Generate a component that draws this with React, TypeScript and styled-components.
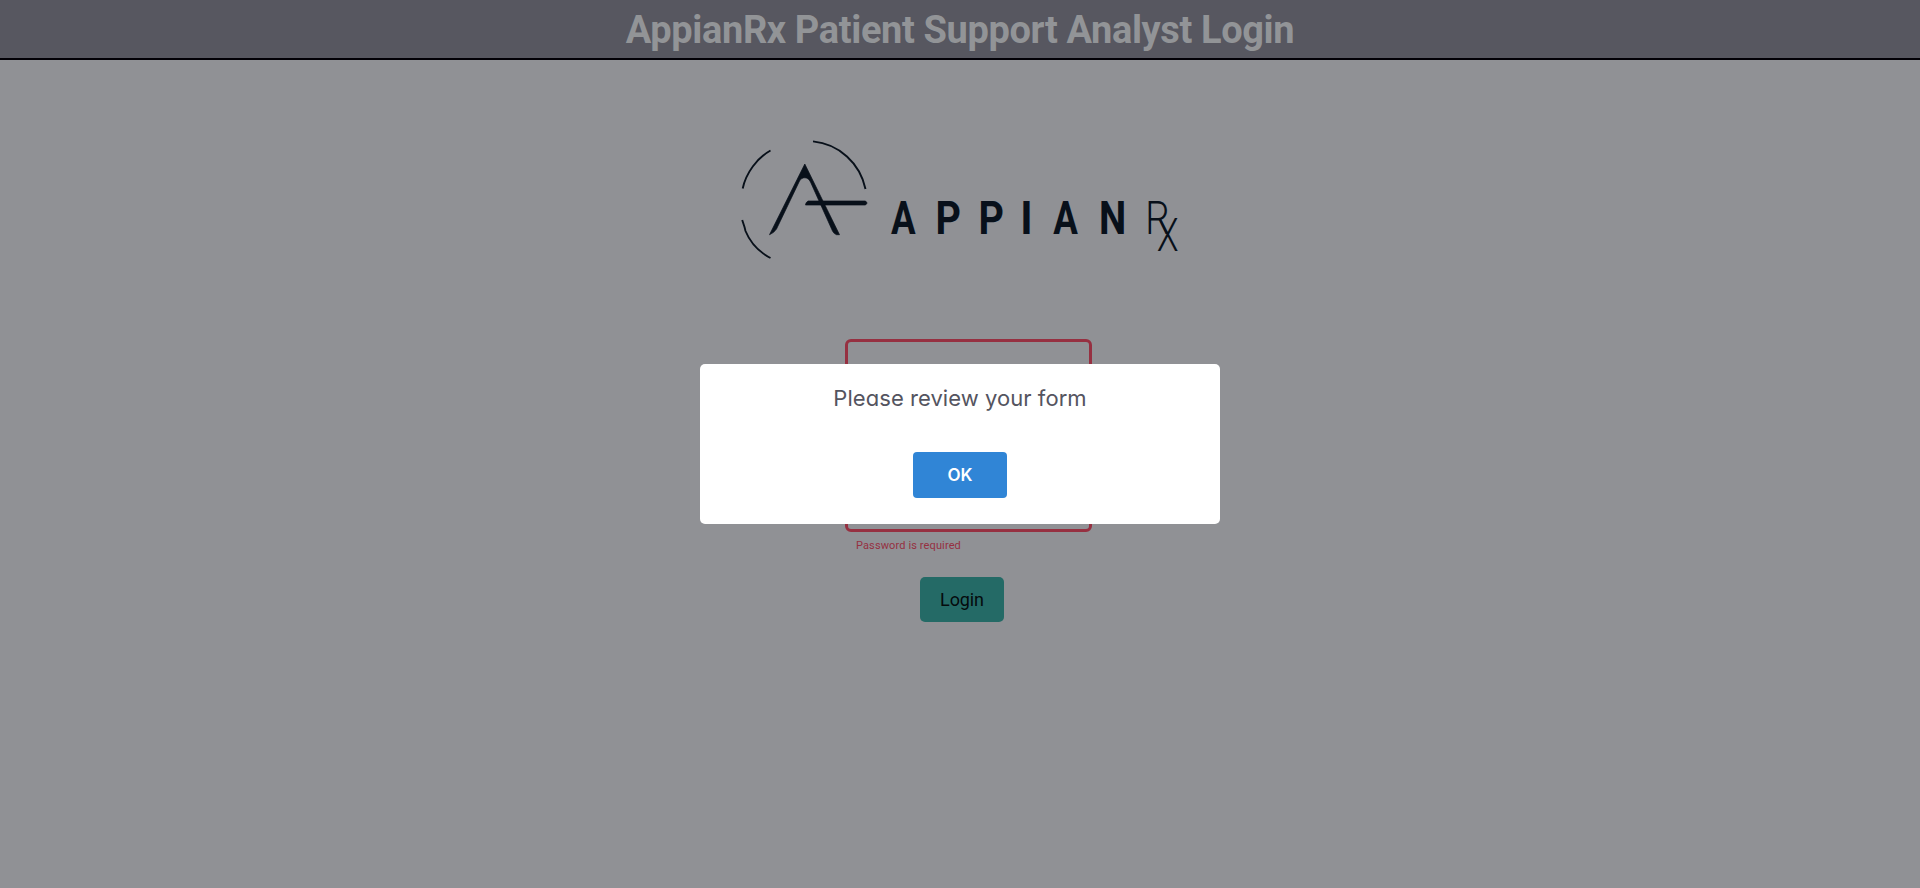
import React from "react";
import styled, { createGlobalStyle } from "styled-components";

const GlobalStyle = createGlobalStyle`
  * { box-sizing: border-box; }
  body { margin: 0; background: #909195; font-family: Roboto, "Liberation Sans", sans-serif; }
`;

const Page = styled.div`
  height: 888px;
  overflow: hidden;
  display: flex;
  flex-direction: column;
`;

const Header = styled.header`
  height: 60px;
  flex: none;
  background: #575760;
  border-bottom: 2px solid #020006;
  display: flex;
  justify-content: center;
`;

const Title = styled.h1`
  margin: 0;
  font-size: 38px;
  line-height: 61px;
  font-weight: 700;
  letter-spacing: -0.01em;
  color: #929497;
  white-space: nowrap;
`;

const LogoArea = styled.div`
  height: 210px;
  display: flex;
  justify-content: center;
  padding-top: 70px;
`;

const Form = styled.form`
  display: flex;
  flex-direction: column;
  align-items: flex-start;
  width: 246px;
  margin: 69px 0 0 845px;
`;

const Field = styled.input<{ $gap: number }>`
  width: 247px;
  height: 72px;
  padding: 0 12px;
  background: transparent;
  border: 3px solid #963041;
  border-radius: 6px;
  margin-top: ${(p) => p.$gap}px;
  outline: none;
`;

const Hint = styled.p`
  margin: 7px 0 0 11px;
  font-size: 11px;
  line-height: 13px;
  letter-spacing: 0.12px;
  color: #963041;
`;

const LoginButton = styled.button`
  width: 84px;
  height: 45px;
  margin: 25px 0 0 75px;
  padding: 0;
  border: 0;
  border-radius: 5px;
  background: #246a66;
  color: #050b0d;
  font: 400 18px Roboto, sans-serif;
  letter-spacing: -0.1px;
`;

const Overlay = styled.div`
  position: fixed;
  inset: 0;
  display: flex;
  align-items: center;
  justify-content: center;
`;

const Dialog = styled.div`
  width: 520px;
  height: 160px;
  background: #fff;
  border-radius: 5px;
  display: flex;
  flex-direction: column;
  align-items: center;
  padding-top: 18px;
`;

const Message = styled.p`
  margin: 0;
  font: 400 22px/32px Inter, sans-serif;
  font-feature-settings: "cv11";
  letter-spacing: 0.05px;
  color: #545460;
  white-space: nowrap;
`;

const OkButton = styled.button`
  width: 94px;
  height: 46px;
  margin-top: 38px;
  padding: 0 0 1px;
  border: 0;
  border-radius: 4px;
  background: #3085d6;
  color: #fff;
  font: 600 17px Inter, sans-serif;
`;

const LogoSvg = styled.svg`
  flex: none;
  overflow: visible;
`;

const Letter = styled.text<{ $weight: number }>`
  font-family: Roboto, sans-serif;
  font-size: 47px;
  font-weight: ${(p) => p.$weight};
  fill: #08101a;
  text-anchor: middle;
`;

const wordmark = [
  { char: "A", x: 903.3, y: 234, stretch: 0.78, weight: 700 },
  { char: "P", x: 948.2, y: 234, stretch: 0.84, weight: 700 },
  { char: "P", x: 991.2, y: 234, stretch: 0.84, weight: 700 },
  { char: "I", x: 1026.5, y: 234, stretch: 0.9, weight: 700 },
  { char: "A", x: 1065.5, y: 234, stretch: 0.78, weight: 700 },
  { char: "N", x: 1112.5, y: 234, stretch: 0.82, weight: 700 },
  { char: "R", x: 1157.6, y: 234, stretch: 0.82, weight: 300 },
  { char: "X", x: 1167.8, y: 251, stretch: 0.76, weight: 300 },
];

const Logo = () => (
  <LogoSvg width="444" height="130" viewBox="738 130 444 130" fill="none" stroke="#08101a">
    <path d="M742.7 188.500C746 173 757 158 770.5 150.500" strokeWidth="1.9" />
    <path d="M742.2 220L744.500 227L745.500 231C750 242 759 252 770.500 258" strokeWidth="1.9" />
    <path d="M813 141.400C839 144 860 163 865.500 189" strokeWidth="1.9" />
    <g fill="#08101a" strokeWidth="0.7" strokeLinejoin="round">
      <path d="M804.8 164L839.500 234.700H836.500Q834 234 832.500 231L810.500 182C808 176.500 802 176.500 799.500 181L776.500 229Q774 233 769.500 234.700Z" />
      <path d="M808 201H865.500L867.200 203L865.500 205H805.500Q805.500 202.500 808 201Z" />
    </g>
    <g stroke="none">
      {wordmark.map((l, i) => (
        <Letter key={i} $weight={l.weight} transform={`translate(${l.x} ${l.y}) scale(${l.stretch} 1)`}>
          {l.char}
        </Letter>
      ))}
    </g>
  </LogoSvg>
);

export default function App() {
  return (
    <>
      <GlobalStyle />
      <Page>
        <Header><Title>AppianRx Patient Support Analyst Login</Title></Header>
        <LogoArea><Logo /></LogoArea>
        <Form>
          <Field $gap={0} />
          <Field $gap={49} type="password" />
          <Hint>Password is required</Hint>
          <LoginButton type="button">Login</LoginButton>
        </Form>
      </Page>
      <Overlay>
        <Dialog role="dialog">
          <Message>Please review your form</Message>
          <OkButton>OK</OkButton>
        </Dialog>
      </Overlay>
    </>
  );
}
